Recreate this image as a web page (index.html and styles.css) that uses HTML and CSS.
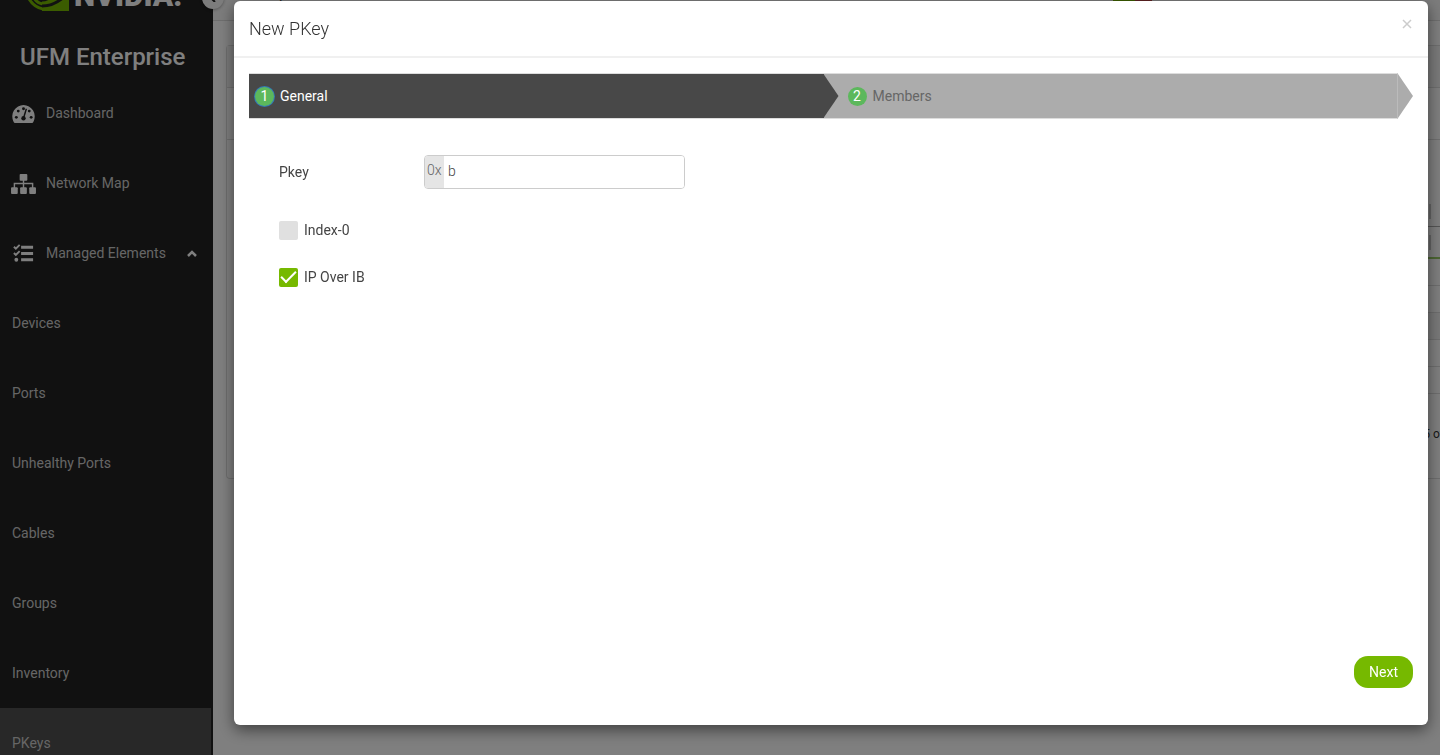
FILE: index.html
```html
<!DOCTYPE html>
<html lang="en">
<head>
<meta charset="utf-8">
<title>UFM Enterprise</title>
<link rel="stylesheet" href="styles.css">
</head>
<body>
<div class="app">
  <aside class="sidebar">
    <div class="brand">
      <svg class="brand-eye" width="42" height="28" viewBox="0 0 42 28" aria-hidden="true">
        <path fill="#76b900" d="M15 0h27v28H15z"/>
        <path fill="none" stroke="#76b900" stroke-width="3" d="M1 14Q6 24 16 26"/>
        <path fill="none" stroke="#76b900" stroke-width="3" d="M6 13Q9 20 16 21"/>
        <path fill="none" stroke="#222" stroke-width="3" d="M15 23Q28 23 39 12"/>
        <path fill="none" stroke="#222" stroke-width="3" d="M15 17Q22 17 29 9"/>
      </svg>
      <span class="brand-name">NVIDIA.</span>
    </div>
    <h1 class="product">UFM Enterprise</h1>
    <nav class="nav">
      <a class="nav-item" href="#">
        <svg class="nav-icon" viewBox="0 0 24 24" aria-hidden="true">
          <path fill="#fff" d="M12 3a12 12 0 0 0-10.600 17q.6 2 2 2h17.200q1.400 0 2-2A12 12 0 0 0 12 3z"/>
          <g fill="#222"><circle cx="4.500" cy="16" r="1.500"/><circle cx="6.500" cy="9.500" r="1.500"/><circle cx="12" cy="7" r="1.500"/><circle cx="18" cy="9.500" r="1.500"/><circle cx="20" cy="16" r="1.500"/><circle cx="12" cy="17" r="2.300"/></g>
          <path stroke="#222" stroke-width="1.500" d="m12 17 3-10"/>
        </svg>
        <span>Dashboard</span>
      </a>
      <a class="nav-item" href="#">
        <svg class="nav-icon nav-icon-map" viewBox="0 0 26 24" aria-hidden="true">
          <g fill="#fff"><rect x="9" y="2" width="8" height="7" rx="1"/><rect y="16" width="7" height="7" rx="1"/><rect x="9.500" y="16" width="7" height="7" rx="1"/><rect x="19" y="16" width="7" height="7" rx="1"/></g>
          <path fill="none" stroke="#fff" stroke-width="1.500" d="M13 8v9M3.500 17v-5h19v5"/>
        </svg>
        <span>Network Map</span>
      </a>
      <a class="nav-item" href="#">
        <svg class="nav-icon" viewBox="0 0 24 24" aria-hidden="true">
          <path fill="none" stroke="#fff" stroke-width="3" d="M9.500 5.500H22M9.500 12H22M9.500 18.500H22"/>
          <path fill="none" stroke="#fff" stroke-width="2" d="m2 5 2 2 4-4M2 11.500l2 2 4-4"/>
          <circle cx="4.500" cy="18.500" r="2" fill="#fff"/>
        </svg>
        <span>Managed Elements</span>
        <svg class="nav-caret" width="10" height="8" viewBox="0 0 10 8" aria-hidden="true"><path fill="none" stroke="#fff" stroke-width="2.500" d="m1 7 4-4 4 4"/></svg>
      </a>
      <a class="nav-item" href="#">Devices</a>
      <a class="nav-item" href="#">Ports</a>
      <a class="nav-item" href="#">Unhealthy Ports</a>
      <a class="nav-item" href="#">Cables</a>
      <a class="nav-item" href="#">Groups</a>
      <a class="nav-item" href="#">Inventory</a>
      <a class="nav-item nav-item-active" href="#">PKeys</a>
    </nav>
    <button class="collapse" type="button" aria-label="Collapse menu">
      <svg width="8" height="8" viewBox="0 0 8 8" aria-hidden="true"><path fill="none" stroke="#222" stroke-width="2" d="M6 0 2 4l4 4"/></svg>
    </button>
  </aside>

  <main class="page">
    <div class="topbar">
      <h2 class="page-title">PKeys</h2>
      <span class="meter"></span>
    </div>
    <section class="card">
      <div class="card-head"></div>
      <div class="card-tools"></div>
      <div class="grid">
        <div class="grid-head"><i class="grip"></i></div>
        <div class="grid-filter"><i class="grip"></i></div>
        <div class="grid-row"></div>
        <div class="grid-row"></div>
        <div class="grid-row grid-row-alt"></div>
        <div class="grid-row"></div>
        <div class="grid-row"></div>
      </div>
      <div class="pager">1 - 5 of</div>
    </section>
  </main>
</div>

<div class="backdrop">
  <div class="modal" role="dialog" aria-modal="true" aria-labelledby="dialog-title">
    <header class="modal-head">
      <h2 class="modal-title" id="dialog-title">New PKey</h2>
      <button class="close" type="button" aria-label="Close">
        <svg width="10" height="10" viewBox="0 0 10 10" aria-hidden="true"><path stroke="#ccc" stroke-width="1.500" d="m1 1 8 8M9 1 1 9"/></svg>
      </button>
    </header>
    <div class="modal-body">
      <nav class="steps">
        <a class="step step-current" href="#" aria-current="step"><span class="badge">1</span>General</a>
        <a class="step" href="#"><span class="badge">2</span>Members</a>
      </nav>
      <form class="form">
        <div class="field">
          <label class="label" for="pkey">Pkey</label>
          <div class="input-group">
            <span class="prefix">0x</span>
            <input class="input" id="pkey" type="text" value="b">
          </div>
        </div>
        <label class="check"><input class="box" type="checkbox">Index-0</label>
        <label class="check"><input class="box" type="checkbox" checked>IP Over IB</label>
      </form>
    </div>
    <footer class="modal-foot">
      <button class="next" type="button">Next</button>
    </footer>
  </div>
</div>
</body>
</html>
```
FILE: styles.css
```css
* {
  box-sizing: border-box;
}

body {
  margin: 0;
  height: 100vh;
  overflow: hidden;
  font: 14px/20px Roboto, "Liberation Sans", sans-serif;
  color: #444;
}

h1,
h2 {
  margin: 0;
  font-weight: 400;
}

a {
  color: inherit;
  text-decoration: none;
}

button {
  padding: 0;
  border: 0;
  font: inherit;
  cursor: pointer;
}

.app {
  display: flex;
  height: 100vh;
  overflow: hidden;
}

.sidebar {
  position: relative;
  flex: none;
  width: 213px;
  background: #222;
  color: #fff;
}

.brand {
  display: flex;
  align-items: flex-end;
  gap: 5px;
  height: 11px;
  padding-left: 27px;
}

.brand-eye {
  flex: none;
}

.brand-name {
  margin-bottom: 3px;
  font-size: 30px;
  font-weight: 900;
  line-height: 24px;
}

.product {
  height: 67px;
  padding: 28px 0 0 20px;
  font-size: 24px;
  font-weight: 500;
  line-height: 36px;
  white-space: nowrap;
}

.nav-item {
  display: flex;
  align-items: center;
  gap: 11px;
  height: 70px;
  padding: 0 16px 0 12px;
  color: #ccc;
}

.nav-item-active {
  margin-right: 2px;
  background: #505050;
}

.nav-icon {
  width: 23px;
  height: 23px;
}

.nav-icon-map {
  width: 25px;
  margin: 0 -1px;
}

.nav-caret {
  margin-left: auto;
}

.collapse {
  position: absolute;
  top: -13px;
  right: -11px;
  display: grid;
  place-items: center;
  width: 22px;
  height: 22px;
  border-radius: 50%;
  background: #f8f8f8;
  box-shadow: 0 1px 3px rgba(0, 0, 0, 0.3);
}

.page {
  flex: 1;
  min-width: 0;
  background: #fff;
}

.topbar {
  display: flex;
  align-items: flex-start;
  justify-content: space-between;
  height: 21px;
  padding: 0 288px 0 36px;
  background: #f8f8f8;
  border-bottom: 1px solid #ddd;
}

.page-title {
  margin-top: -15px;
  font-size: 16px;
  white-space: nowrap;
}

.meter {
  width: 39px;
  height: 1px;
  background: linear-gradient(90deg, #76b900 22px, #b44 22px);
}

.card {
  margin: 24px 0 0 13px;
  border: 1px solid #ddd;
  border-right: 0;
  border-radius: 4px 0 0 4px;
}

.card-head {
  height: 42px;
  background: #f5f5f5;
  border-bottom: 1px solid #ddd;
}

.card-tools {
  height: 52px;
  border-bottom: 1px solid #ddd;
}

.grid {
  margin-left: 15px;
}

.grid-head,
.grid-filter {
  display: flex;
  align-items: flex-end;
  justify-content: flex-end;
  padding: 0 9px 7px 0;
}

.grid-head {
  height: 87px;
  border-bottom: 1px solid #aaa;
}

.grid-filter {
  height: 32px;
  border-bottom: 2px solid #9c6;
}

.grip {
  width: 2px;
  height: 15px;
  background: #ccc;
}

.grid-row {
  height: 27px;
  border-bottom: 1px solid #ddd;
}

.grid-row-alt {
  background: #f3f3f3;
}

.pager {
  padding: 30px 0 34px;
  margin-right: -4px;
  font-size: 12px;
  text-align: right;
  color: #333;
}

.backdrop {
  position: fixed;
  inset: 0;
  display: flex;
  padding: 1px 12px 30px 234px;
  background: rgba(0, 0, 0, 0.5);
}

.modal {
  flex: 1;
  display: flex;
  flex-direction: column;
  background: #fff;
  border-radius: 6px;
  box-shadow: 0 5px 15px rgba(0, 0, 0, 0.5);
}

.modal-head {
  display: flex;
  align-items: center;
  justify-content: space-between;
  height: 57px;
  padding: 0 15px;
  border-bottom: 2px solid #f0f0f0;
}

.modal-title {
  font-size: 18px;
  font-weight: 300;
  color: #333;
}

.close {
  display: grid;
  place-items: center;
  width: 12px;
  height: 20px;
  margin-bottom: 10px;
  background: none;
}

.modal-body {
  flex: 1;
  padding: 15px;
}

.steps {
  display: flex;
  height: 46px;
  padding-right: 15px;
}

.step {
  position: relative;
  width: 50%;
  display: flex;
  align-items: center;
  gap: 6px;
  padding-left: 24px;
  background: #acacac;
  border: solid #ddd;
  border-width: 1px 1px 1px 0;
  border-right-color: #bbb;
  color: #666;
}

.step::after {
  content: "";
  position: absolute;
  top: 0;
  left: 100%;
  width: 15px;
  height: 44px;
  margin-left: 1px;
  background: #acacac;
  clip-path: polygon(0 0, 100% 50%, 0 100%);
}

.step-current {
  z-index: 1;
  padding-left: 6px;
  background: #484848;
  border-right: 0;
  color: #fff;
}

.step-current::after {
  margin-left: 0;
  background: #484848;
}

.badge {
  width: 19px;
  height: 19px;
  border-radius: 50%;
  background: #5cb85c;
  color: #fff;
  line-height: 19px;
  text-align: center;
}

.step-current .badge {
  box-shadow: 0 0 0 1px #337ab7;
}

.form {
  padding: 36px 30px 0;
}

.field {
  display: flex;
  align-items: center;
  margin-bottom: 31px;
}

.label {
  width: 145px;
}

.input-group {
  display: flex;
  width: 261px;
  height: 34px;
  overflow: hidden;
  border: 1px solid #ccc;
  border-radius: 4px;
}

.prefix {
  width: 19px;
  padding: 4px 0 0 2px;
  background: #e5e5e5;
  color: #666;
  font-weight: 300;
}

.input {
  flex: 1;
  min-width: 0;
  padding: 0 4px 2px;
  border: 0;
  outline: 0;
  font: inherit;
  font-weight: 300;
  color: #444;
}

.check {
  display: flex;
  align-items: center;
  gap: 6px;
  width: max-content;
  margin-bottom: 27px;
}

.box {
  appearance: none;
  display: grid;
  place-items: center;
  width: 19px;
  height: 19px;
  margin: 0;
  border-radius: 2px;
  background: #e0e0e0;
}

.box:checked {
  background: #76b900;
}

.box:checked::before {
  content: "";
  width: 13px;
  height: 6px;
  margin-bottom: 4px;
  border: solid #fff;
  border-width: 0 0 2px 2px;
  transform: rotate(-45deg);
}

.modal-foot {
  display: flex;
  justify-content: flex-end;
  padding: 0 15px 37px;
}

.next {
  height: 32px;
  padding: 0 15px;
  border-radius: 14px;
  background: #76b900;
  color: #fff;
}
```
